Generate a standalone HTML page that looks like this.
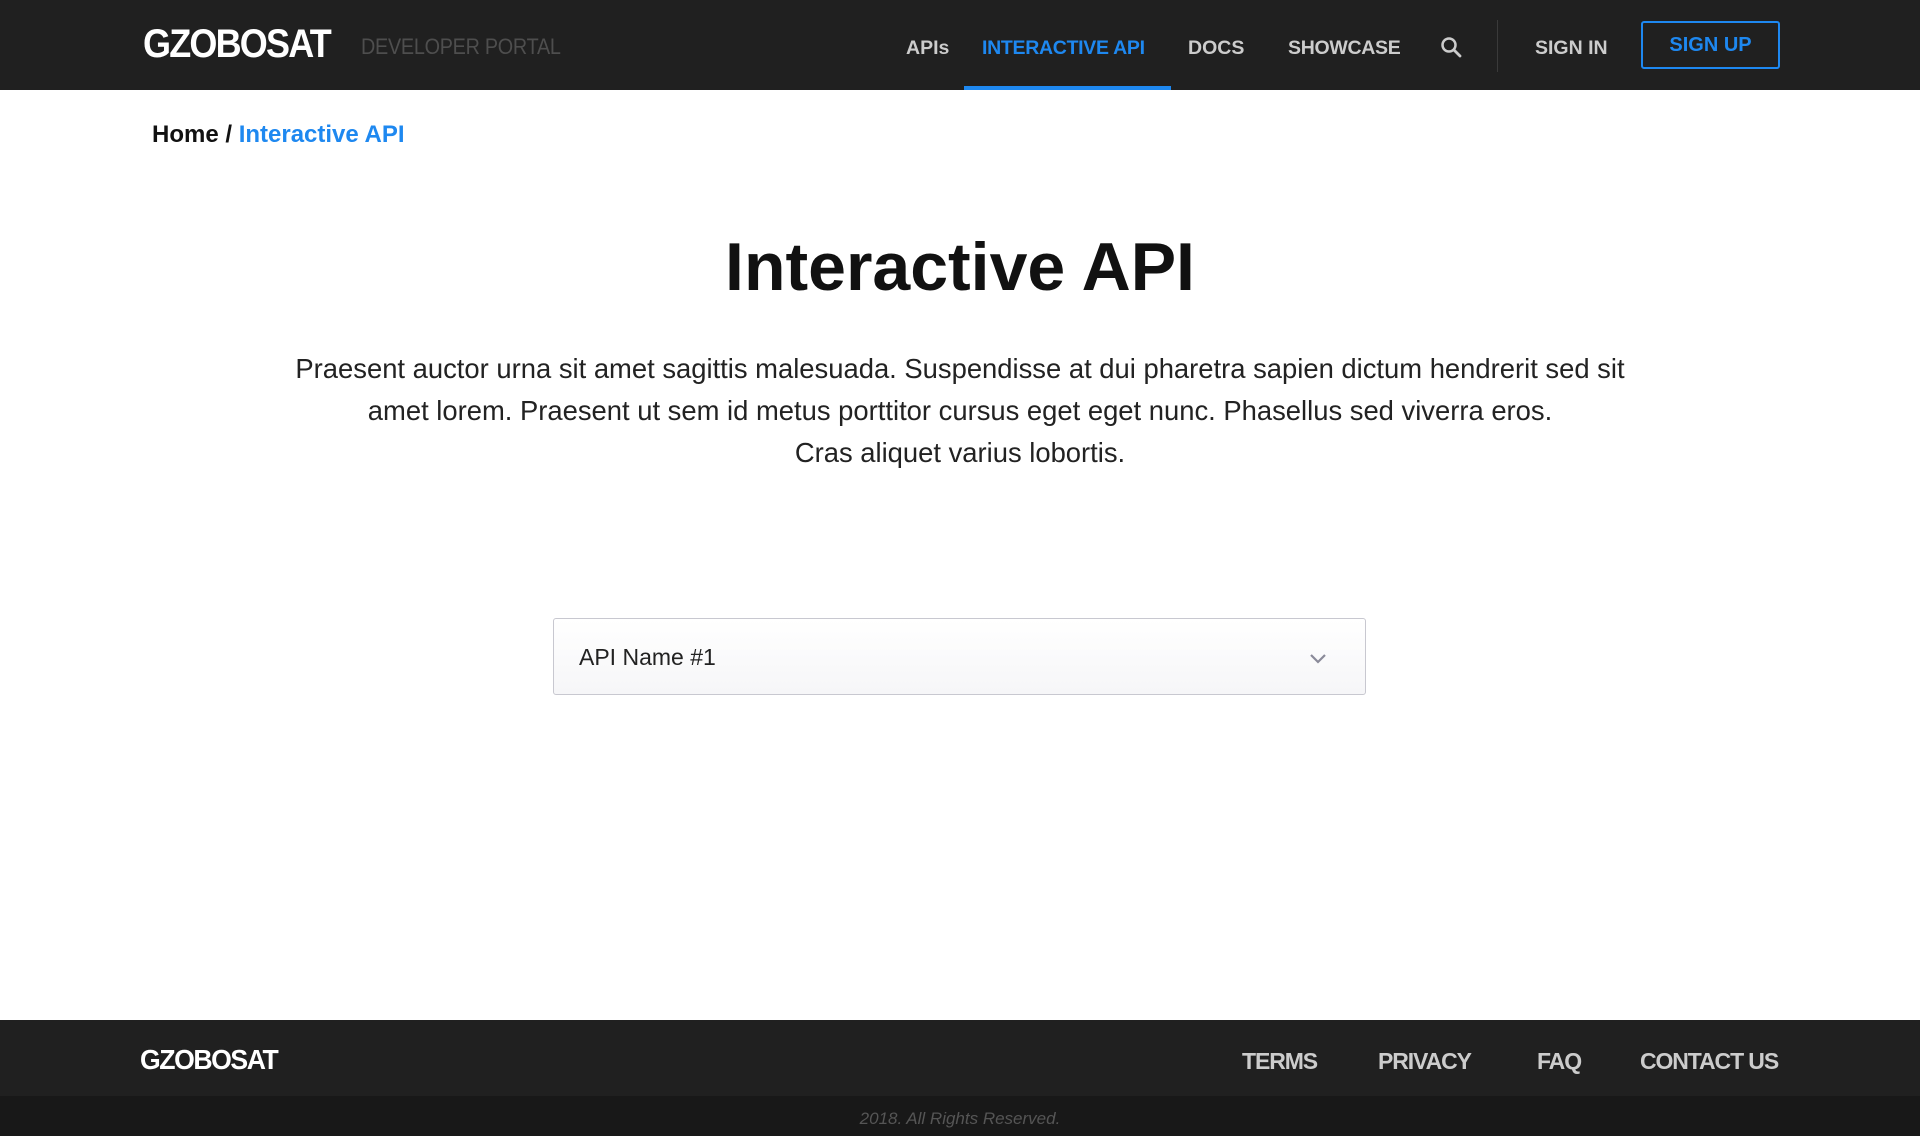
<!DOCTYPE html>
<html><head><meta charset="utf-8"><style>
*{margin:0;padding:0;box-sizing:border-box}
body{width:1920px;height:1136px;background:#fff;font-family:"Liberation Sans",sans-serif;position:relative;overflow:hidden;color:#111}
.hdr{position:absolute;left:0;top:0;width:1920px;height:90px;background:#202020}
.a{position:absolute;white-space:nowrap}
.logo{font-weight:900;color:#fff;letter-spacing:-2px;font-style:normal}
.nav{font-weight:bold;font-size:19.5px;color:#ccc;top:37px}
.ft{font-weight:bold;font-size:23px;color:#ccc;top:1048px;letter-spacing:-1.1px}
</style></head><body>
<div class="hdr"></div>
<div class="a logo" style="left:143px;top:23px;font-size:40px;line-height:42px;transform:scaleX(0.9);transform-origin:left">GZOBOSAT</div>
<div class="a" style="left:361px;top:34px;font-size:22px;color:#4e4e4e;font-weight:300;letter-spacing:-0.3px;transform:scaleX(0.9);transform-origin:left">DEVELOPER PORTAL</div>
<div class="a nav" style="left:906px">APIs</div>
<div class="a nav" style="left:982px;color:#1e88f0;letter-spacing:-0.3px">INTERACTIVE API</div>
<div class="a" style="left:964px;top:86px;width:207px;height:4px;background:#1e88f0"></div>
<div class="a nav" style="left:1188px">DOCS</div>
<div class="a nav" style="left:1288px;letter-spacing:-0.3px">SHOWCASE</div>
<svg class="a" style="left:1439px;top:35px" width="24" height="24" viewBox="0 0 24 24"><circle cx="10" cy="10" r="6.5" fill="none" stroke="#ccc" stroke-width="2.5"/><line x1="15" y1="15" x2="21" y2="21" stroke="#ccc" stroke-width="2.8" stroke-linecap="round"/></svg>
<div class="a" style="left:1497px;top:20px;width:1px;height:52px;background:#3a3a3a"></div>
<div class="a nav" style="left:1535px">SIGN IN</div>
<div class="a" style="left:1641px;top:21px;width:139px;height:48px;border:2px solid #1e88f0;border-radius:3px;color:#1e88f0;font-weight:bold;font-size:20px;text-align:center;line-height:44px">SIGN UP</div>
<div class="a" style="left:152px;top:121px;font-size:24px;font-weight:bold">Home / <span style="color:#1e88f0">Interactive API</span></div>
<div class="a" style="left:0;width:1920px;text-align:center;top:228px;font-size:68px;font-weight:bold;color:#111">Interactive API</div>
<div class="a" style="left:210px;width:1500px;text-align:center;top:348px;font-size:27.4px;line-height:42px;color:#222;white-space:normal">Praesent auctor urna sit amet sagittis malesuada. Suspendisse at dui pharetra sapien dictum hendrerit sed sit<br>amet lorem. Praesent ut sem id metus porttitor cursus eget eget nunc. Phasellus sed viverra eros.<br>Cras aliquet varius lobortis.</div>
<div class="a" style="left:553px;top:618px;width:813px;height:77px;border:1px solid #c8c8d0;border-radius:3px;background:linear-gradient(#fff,#f6f6f8)"></div>
<div class="a" style="left:579px;top:644px;font-size:23px;color:#222">API Name #1</div>
<svg class="a" style="left:1308px;top:652px" width="20" height="14" viewBox="0 0 20 14"><polyline points="3,3 10,10 17,3" fill="none" stroke="#8a8a99" stroke-width="2.2"/></svg>
<div class="a" style="left:0;top:1020px;width:1920px;height:76px;background:#202020"></div>
<div class="a" style="left:0;top:1096px;width:1920px;height:40px;background:#181818"></div>
<div class="a logo" style="left:140px;top:1045px;font-size:28px;line-height:30px;letter-spacing:-1.5px;transform:scaleX(0.95);transform-origin:left">GZOBOSAT</div>
<div class="a ft" style="left:1242px">TERMS</div>
<div class="a ft" style="left:1378px">PRIVACY</div>
<div class="a ft" style="left:1537px">FAQ</div>
<div class="a ft" style="left:1640px">CONTACT US</div>
<div class="a" style="left:0;width:1920px;text-align:center;top:1109px;font-size:17px;font-style:italic;color:#555">2018. All Rights Reserved.</div>
</body></html>
